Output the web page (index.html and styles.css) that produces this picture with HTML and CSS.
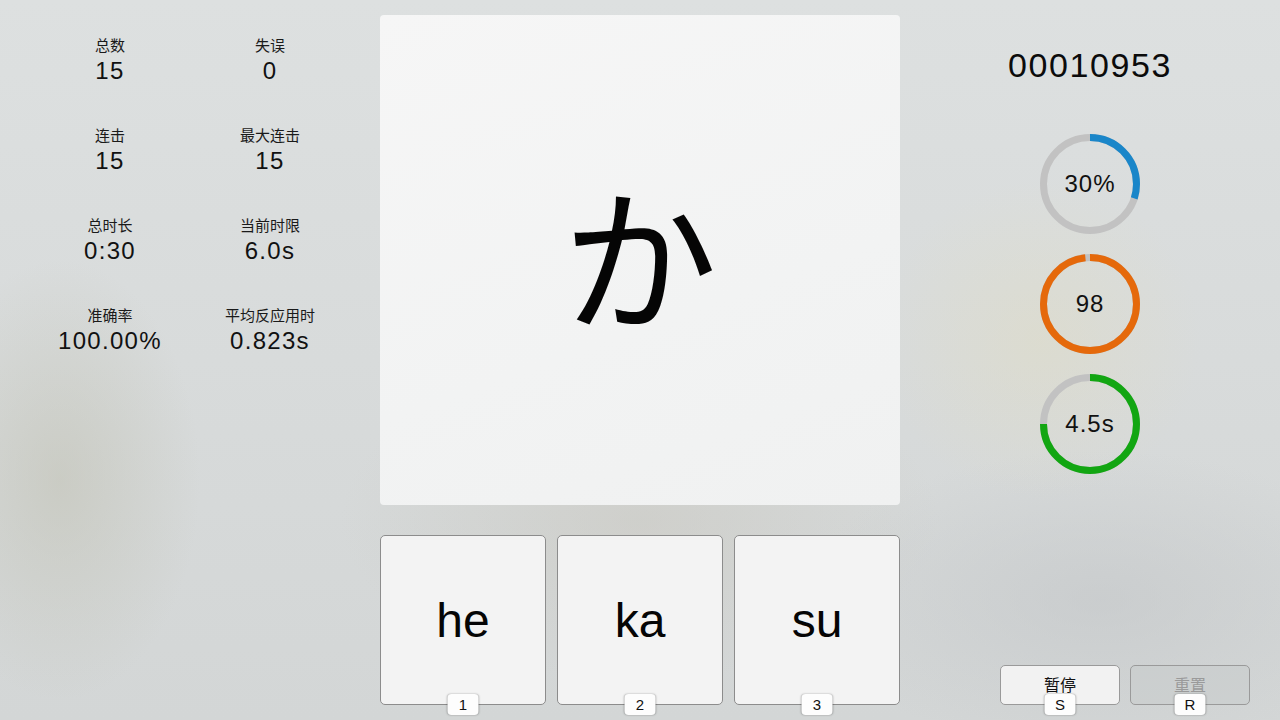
FILE: index.html
```html
<!DOCTYPE html>
<html lang="zh">
<head>
<meta charset="utf-8">
<title>Kana</title>
<link rel="stylesheet" href="styles.css">
</head>
<body>
<div class="app">
  <aside class="stats">
    <div class="stat"><div class="label">总数</div><div class="value">15</div></div>
    <div class="stat"><div class="label">失误</div><div class="value">0</div></div>
    <div class="stat"><div class="label">连击</div><div class="value">15</div></div>
    <div class="stat"><div class="label">最大连击</div><div class="value">15</div></div>
    <div class="stat"><div class="label">总时长</div><div class="value">0:30</div></div>
    <div class="stat"><div class="label">当前时限</div><div class="value">6.0s</div></div>
    <div class="stat"><div class="label">准确率</div><div class="value">100.00%</div></div>
    <div class="stat"><div class="label">平均反应用时</div><div class="value">0.823s</div></div>
  </aside>

  <main class="center">
    <div class="card"><span class="kana">か</span></div>
    <div class="answers">
      <button class="answer"><span class="romaji">he</span><span class="key">1</span></button>
      <button class="answer"><span class="romaji">ka</span><span class="key">2</span></button>
      <button class="answer"><span class="romaji">su</span><span class="key">3</span></button>
    </div>
  </main>

  <aside class="side">
    <div class="score">00010953</div>
    <div class="rings">
      <div class="ring">
        <svg viewBox="0 0 100 100" width="100" height="100">
          <circle class="track" cx="50" cy="50" r="46.5"/>
          <circle class="arc blue" cx="50" cy="50" r="46.5" pathLength="100" stroke-dasharray="30 100" transform="rotate(-90 50 50)"/>
        </svg>
        <span class="ring-text">30%</span>
      </div>
      <div class="ring">
        <svg viewBox="0 0 100 100" width="100" height="100">
          <circle class="track" cx="50" cy="50" r="46.5"/>
          <circle class="arc orange" cx="50" cy="50" r="46.5" pathLength="100" stroke-dasharray="98.4 100" transform="rotate(-90 50 50)"/>
        </svg>
        <span class="ring-text">98</span>
      </div>
      <div class="ring">
        <svg viewBox="0 0 100 100" width="100" height="100">
          <circle class="track" cx="50" cy="50" r="46.5"/>
          <circle class="arc green" cx="50" cy="50" r="46.5" pathLength="100" stroke-dasharray="75 100" transform="rotate(-90 50 50)"/>
        </svg>
        <span class="ring-text">4.5s</span>
      </div>
    </div>
    <div class="controls">
      <button class="ctrl"><span>暂停</span><span class="key">S</span></button>
      <button class="ctrl disabled"><span>重置</span><span class="key">R</span></button>
    </div>
  </aside>
</div>
</body>
</html>
```

FILE: styles.css
```css
* { box-sizing: border-box; }
html, body { margin: 0; padding: 0; }
body {
  width: 1280px;
  height: 720px;
  overflow: hidden;
  font-family: "Liberation Sans", "Noto Sans CJK SC", sans-serif;
  color: #111;
  background:
    radial-gradient(ellipse 140px 220px at 60px 480px, rgba(190,190,175,0.5), rgba(190,190,175,0) 100%),
    radial-gradient(ellipse 160px 160px at 1040px 340px, rgba(225,220,190,0.4), rgba(225,220,190,0) 100%),
    radial-gradient(ellipse 300px 150px at 1100px 600px, rgba(195,198,200,0.6), rgba(195,198,200,0) 100%),
    radial-gradient(ellipse 300px 160px at 640px 520px, rgba(200,198,190,0.5), rgba(200,198,190,0) 100%),
    linear-gradient(180deg, #dde0e0 0%, #d8dbdb 50%, #d3d6d6 100%);
}
.app {
  display: flex;
  height: 720px;
}

/* left stats */
.stats {
  width: 380px;
  padding: 36px 30px 0 30px;
  display: grid;
  grid-template-columns: 160px 160px;
  grid-auto-rows: 90px;
  align-content: start;
}
.stat {
  display: flex;
  flex-direction: column;
  align-items: center;
}
.label {
  font-family: "Noto Sans CJK SC", sans-serif;
  font-size: 15px;
  line-height: 18px;
  color: #1a1a1a;
}
.value {
  margin-top: 2px;
  font-size: 24px;
  line-height: 30px;
  letter-spacing: 1.3px;
  color: #111;
}

/* center */
.center {
  width: 520px;
  padding-top: 15px;
  display: flex;
  flex-direction: column;
  gap: 30px;
}
.card {
  height: 490px;
  border-radius: 4px;
  background: linear-gradient(160deg, #f6f6f6 0%, #f2f3f3 60%, #f0f1f1 100%);
  display: flex;
  align-items: center;
  justify-content: center;
}
.kana {
  font-family: "Noto Sans CJK JP", sans-serif;
  font-size: 155px;
  line-height: 1;
  color: #050505;
  margin-top: -18px;
  margin-left: 0px;
}
.answers {
  display: flex;
  gap: 11px;
  height: 170px;
}
.answer {
  position: relative;
  flex: 1;
  margin: 0;
  padding: 0;
  background: #f3f3f3;
  border: 1px solid #8c8c8c;
  border-radius: 5px;
  display: flex;
  align-items: center;
  justify-content: center;
  font-family: inherit;
  color: #050505;
}
.romaji {
  font-size: 48px;
  line-height: 1;
  margin-top: 2px;
}
.key {
  position: absolute;
  left: 50%;
  bottom: -11px;
  transform: translateX(-50%);
  width: 31px;
  height: 21px;
  border-radius: 4px;
  background: #fdfdfd;
  box-shadow: 0 0 2px rgba(0,0,0,0.35);
  font-family: "Liberation Sans", sans-serif;
  font-size: 15px;
  line-height: 21px;
  text-align: center;
  color: #111;
}

/* right side */
.side {
  width: 380px;
  display: flex;
  flex-direction: column;
  align-items: center;
}
.score {
  margin-top: 44px;
  font-size: 34px;
  line-height: 42px;
  letter-spacing: 1.6px;
  color: #0b0b0b;
}
.rings {
  margin-top: 48px;
  display: flex;
  flex-direction: column;
  gap: 20px;
}
.ring {
  position: relative;
  width: 100px;
  height: 100px;
}
.ring svg { display: block; }
.track {
  fill: none;
  stroke: #c2c2c2;
  stroke-width: 7;
}
.arc {
  fill: none;
  stroke-width: 7;
}
.blue { stroke: #1a86c9; }
.orange { stroke: #e5690b; }
.green { stroke: #12a612; }
.ring-text {
  position: absolute;
  inset: 0;
  display: flex;
  align-items: center;
  justify-content: center;
  font-size: 24px;
  letter-spacing: 1px;
  color: #111;
}
.controls {
  margin-top: auto;
  margin-bottom: 15px;
  align-self: flex-end;
  margin-right: 30px;
  display: flex;
  gap: 10px;
}
.ctrl {
  position: relative;
  width: 120px;
  height: 40px;
  margin: 0;
  padding: 0;
  border: 1px solid #9a9a9a;
  border-radius: 5px;
  background: #f2f2f2;
  font-family: "Noto Sans CJK SC", sans-serif;
  font-size: 16px;
  color: #111;
  display: flex;
  align-items: center;
  justify-content: center;
}
.ctrl > span:first-child { margin-top: -2px; }
.ctrl.disabled {
  background: rgba(200,203,203,0.5);
  color: #9a9a9a;
}
.ctrl .key { font-size: 15px; }
.ctrl.disabled .key { color: #111; }
```
